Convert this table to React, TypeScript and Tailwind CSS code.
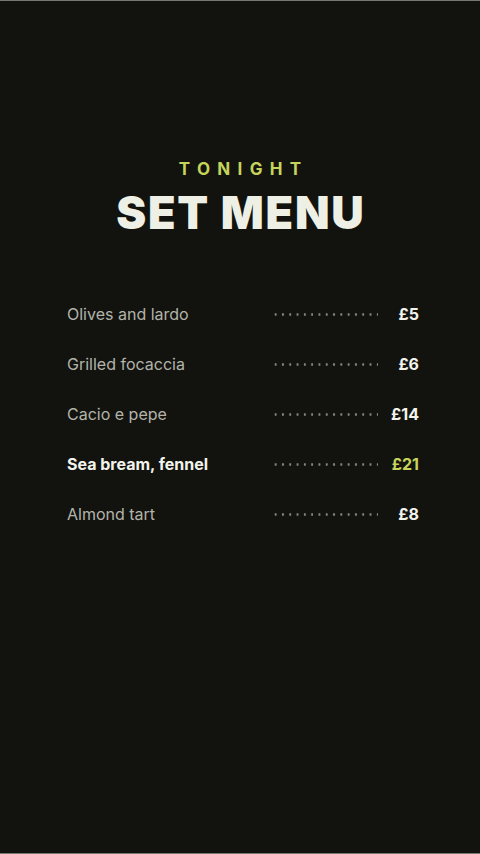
const items = [
  { name: "Olives and lardo", price: "£5" },
  { name: "Grilled focaccia", price: "£6" },
  { name: "Cacio e pepe", price: "£14" },
  { name: "Sea bream, fennel", price: "£21", featured: true },
  { name: "Almond tart", price: "£8" },
];

const App = () => {
  return (
    <div className="h-[854px] w-[480px] bg-[#12130f] border-y border-[#77776f] font-['Inter',sans-serif] pt-[158px]">
      <div className="text-center">
        <p className="text-[17px] leading-[20px] font-bold tracking-[0.43em] pl-[0.43em] text-[#c6d45c]">
          TONIGHT
        </p>
        <h1 className="mt-[10px] text-[45px] leading-[48px] font-black tracking-[0.04em] pl-[0.04em] text-[#eef0e6]">
          SET MENU
        </h1>
      </div>

      <div className="mt-[52px] pl-[67px] pr-[61px]">
        {items.map((item) => (
          <div key={item.name} className="flex h-[50px] items-center">
            <p
              className={
                item.featured
                  ? "flex-1 text-[16px] font-bold text-[#f2f3ec]"
                  : "flex-1 text-[16px] text-[#b3b3aa]"
              }
            >
              {item.name}
            </p>
            <div className="h-[3px] w-[104px] bg-[radial-gradient(circle,_#85857b_1px,_transparent_1.4px)] bg-[length:7.3px_3px] bg-[position:-2px_0]" />
            <p
              className={
                item.featured
                  ? "w-[41px] text-right text-[16px] font-bold text-[#c6d45c]"
                  : "w-[41px] text-right text-[16px] font-bold text-[#f2f3ec]"
              }
            >
              {item.price}
            </p>
          </div>
        ))}
      </div>
    </div>
  );
};

export default App;
